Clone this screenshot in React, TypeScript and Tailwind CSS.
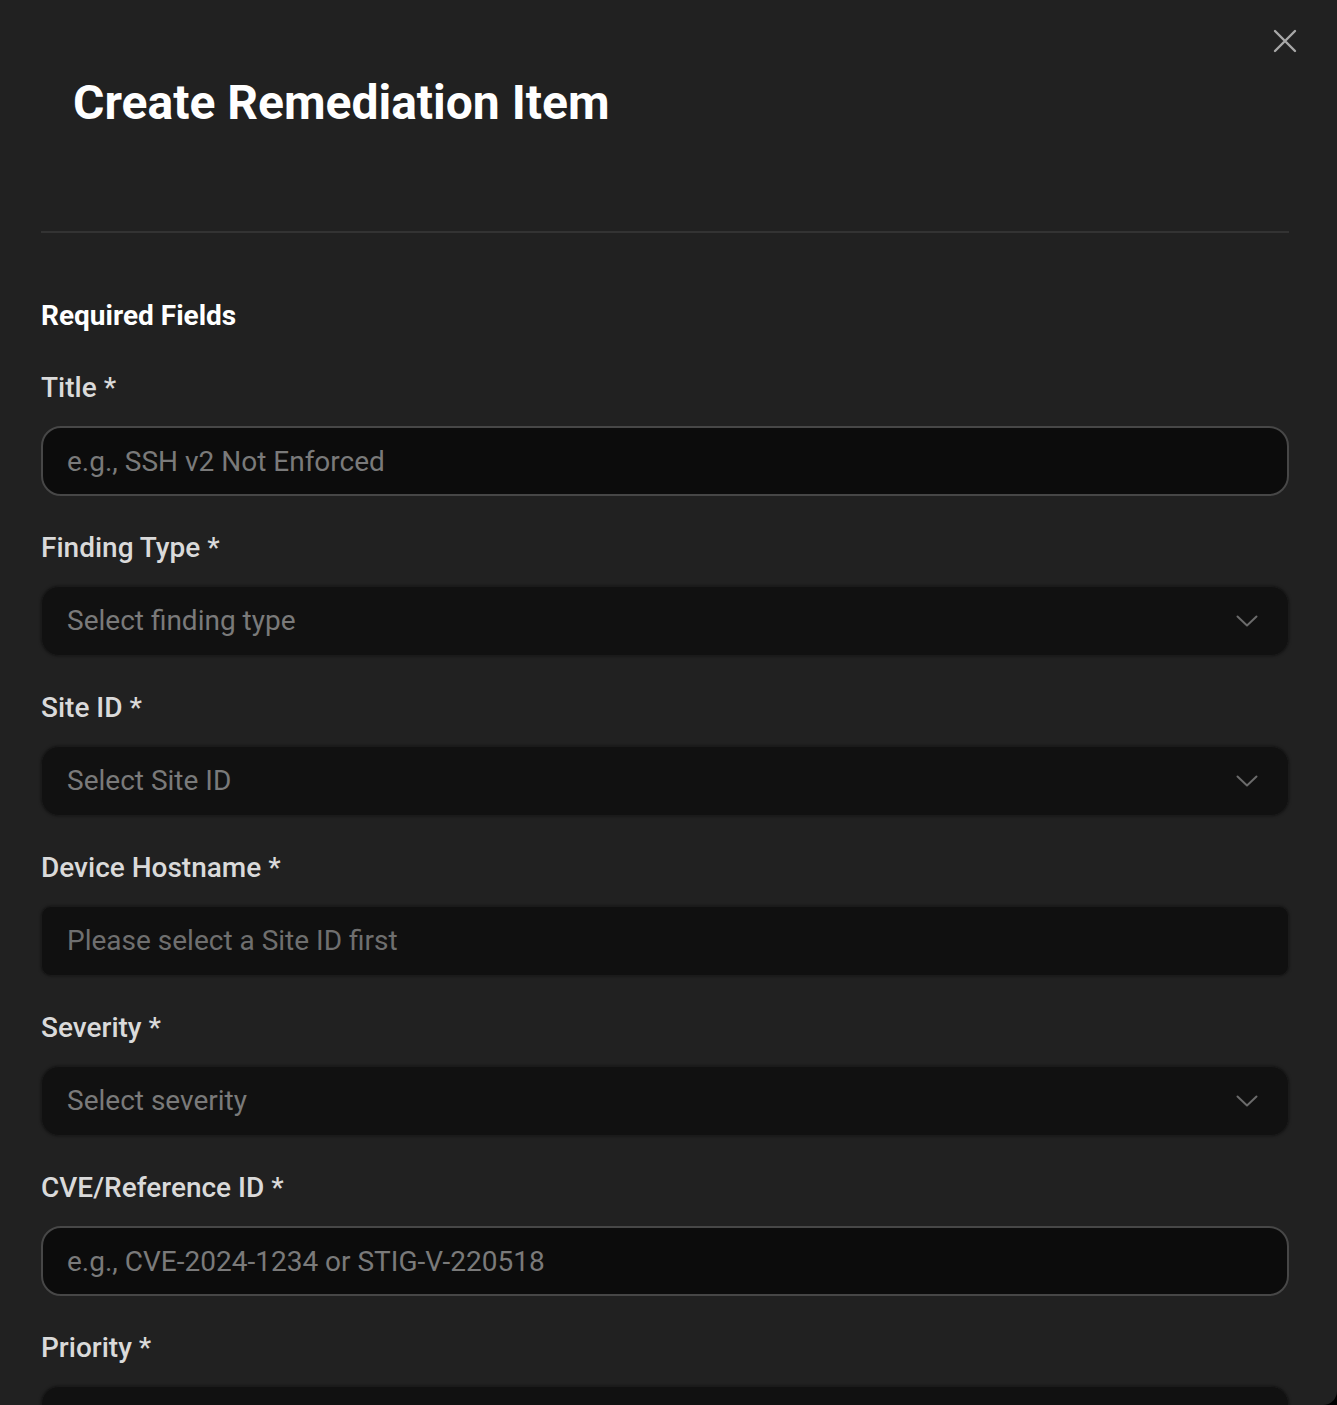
import React from "react";

type Field = {
  label: string;
  placeholder: string;
  kind: "input" | "select" | "disabled";
};

const fields: Field[] = [
  { label: "Title", placeholder: "e.g., SSH v2 Not Enforced", kind: "input" },
  { label: "Finding Type", placeholder: "Select finding type", kind: "select" },
  { label: "Site ID", placeholder: "Select Site ID", kind: "select" },
  { label: "Device Hostname", placeholder: "Please select a Site ID first", kind: "disabled" },
  { label: "Severity", placeholder: "Select severity", kind: "select" },
  { label: "CVE/Reference ID", placeholder: "e.g., CVE-2024-1234 or STIG-V-220518", kind: "input" },
  { label: "Priority", placeholder: "Select priority", kind: "select" },
];

function Chevron() {
  return (
    <svg width="22" height="12" viewBox="0 0 22 12" fill="none" stroke="#6b6b6b" strokeWidth="2" strokeLinecap="round" strokeLinejoin="round">
      <path d="M1.5 1.5 11 10.5 20.5 1.5" />
    </svg>
  );
}

function FieldControl({ field }: { field: Field }) {
  if (field.kind === "input") {
    return (
      <input
        placeholder={field.placeholder}
        className="h-[70px] w-full rounded-[20px] border-2 border-[#474747] bg-[#0c0c0c] px-[24px] text-[28px] text-white outline-none placeholder:text-[#7a7a7a]"
      />
    );
  }
  if (field.kind === "disabled") {
    return (
      <div className="flex h-[70px] w-full items-center rounded-[10px] border border-[#1a1a1a] bg-[#101010] px-[25px] text-[28px] text-[#6f6f6f] shadow-[0_0_3px_rgba(0,0,0,0.5)]">
        {field.placeholder}
      </div>
    );
  }
  return (
    <button
      type="button"
      className="flex h-[70px] w-full items-center justify-between rounded-[18px] border border-[#1a1a1a] bg-[#111111] pl-[25px] pr-[30px] text-left text-[28px] text-[#7a7a7a] shadow-[0_0_3px_rgba(0,0,0,0.5)]"
    >
      <span>{field.placeholder}</span>
      <Chevron />
    </button>
  );
}

export default function App() {
  return (
    <div className="min-h-[1405px] w-full bg-black" style={{ fontFamily: "Roboto, 'Noto Sans', sans-serif" }}>
      <div className="relative h-[1405px] overflow-hidden rounded-br-[14px] bg-[#212121]">
        <button type="button" aria-label="Close" className="absolute right-[40px] top-[29px] text-[#a8a8a8]">
          <svg width="24" height="24" viewBox="0 0 24 24" fill="none" stroke="currentColor" strokeWidth="2.4" strokeLinecap="round">
            <path d="M2 2 22 22M22 2 2 22" />
          </svg>
        </button>

        <header className="pl-[73px] pt-[74px]">
          <h1 className="text-[48px] font-bold leading-[58px] text-white">Create Remediation Item</h1>
        </header>

        <div className="ml-[41px] mr-[48px] mt-[99px] h-[2px] bg-[#333333]" />

        <form className="ml-[41px] mr-[48px] mt-[63px]">
          <h2 className="text-[28px] font-bold leading-[40px] text-white">Required Fields</h2>
          <div className="mt-[31px] flex flex-col gap-[31px]">
            {fields.map((field) => (
              <div key={field.label} className="flex flex-col gap-[18px]">
                <label className="pt-[1px] text-[28px] font-medium leading-[40px] text-[#dadada]">
                  {field.label} *
                </label>
                <FieldControl field={field} />
              </div>
            ))}
          </div>
        </form>
      </div>
    </div>
  );
}
